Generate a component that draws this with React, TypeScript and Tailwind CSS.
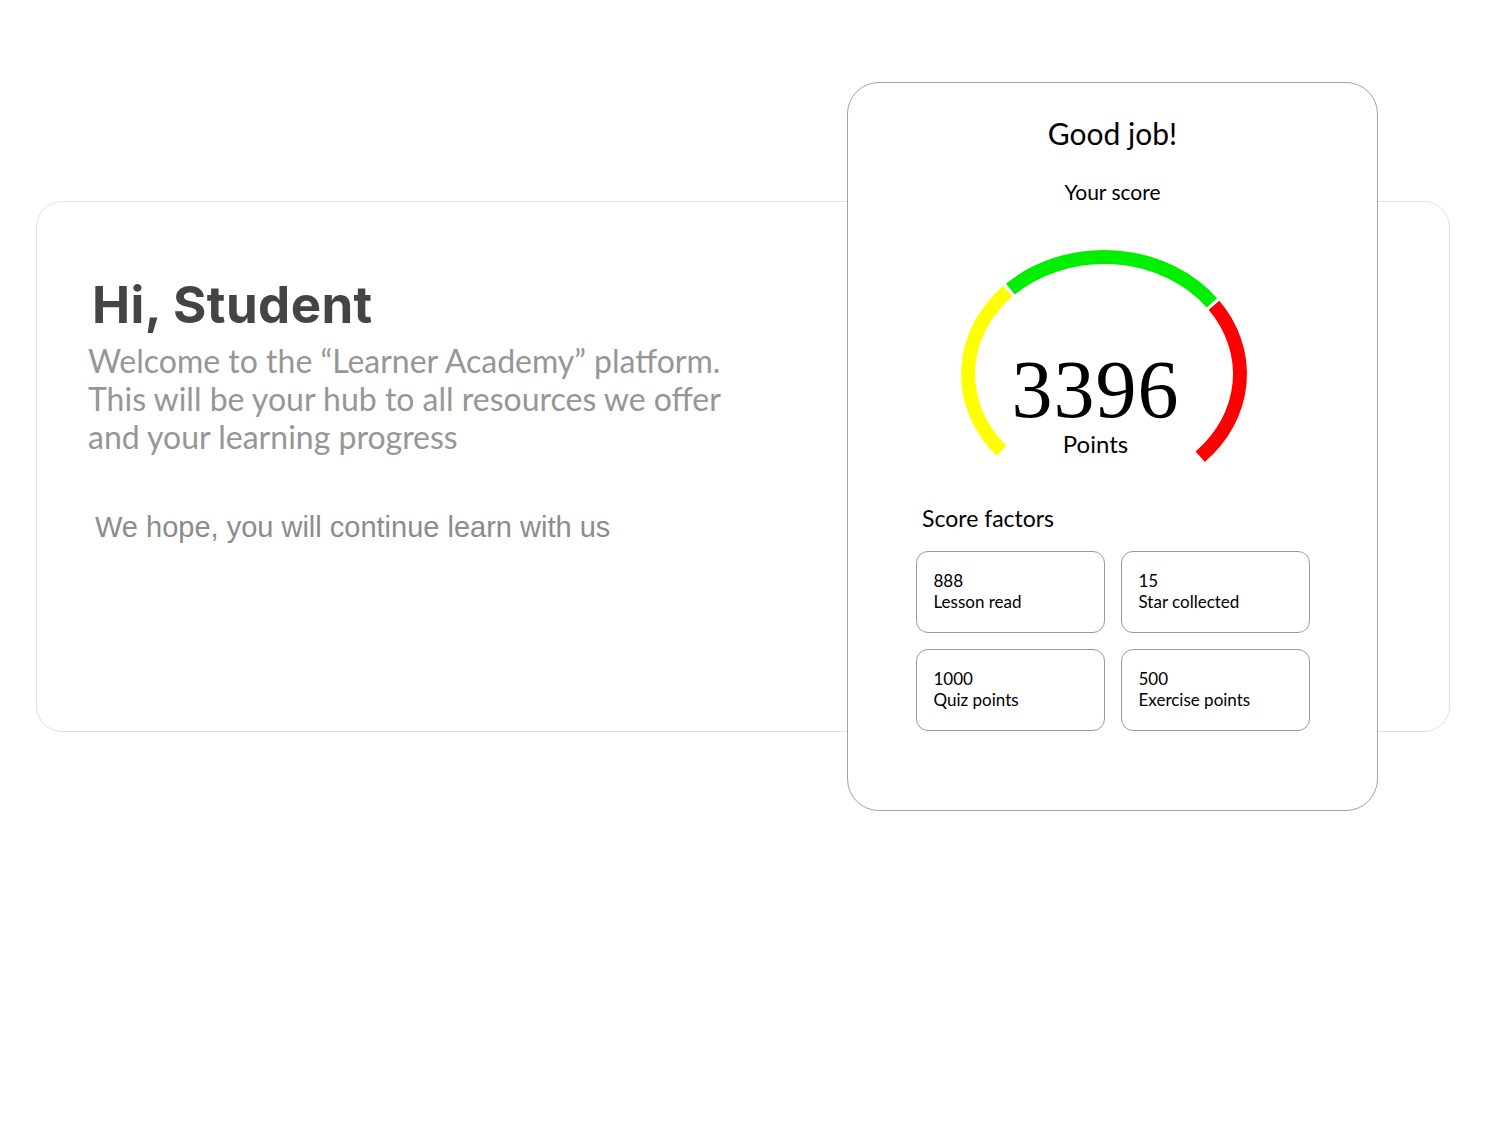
import React from "react";

const sans = { fontFamily: "Lato, 'Noto Sans', sans-serif" };

// point on the gauge ellipse, angle in degrees (0 = right, 90 = top)
const pt = (cx: number, cy: number, rx: number, ry: number, deg: number) => {
  const r = (deg * Math.PI) / 180;
  return [cx + rx * Math.cos(r), cy - ry * Math.sin(r)];
};

const arc = (from: number, to: number) => {
  const cx = 256, cy = 133, rx = 136, ry = 117;
  const [x1, y1] = pt(cx, cy, rx, ry, from);
  const [x2, y2] = pt(cx, cy, rx, ry, to);
  const large = from - to > 180 ? 1 : 0;
  return `M ${x1.toFixed(1)} ${y1.toFixed(1)} A ${rx} ${ry} 0 ${large} 1 ${x2.toFixed(1)} ${y2.toFixed(1)}`;
};

const factors = [
  { value: "888", label: "Lesson read" },
  { value: "15", label: "Star collected" },
  { value: "1000", label: "Quiz points" },
  { value: "500", label: "Exercise points" },
];

const Gauge = () => {
  return (
    <div className="relative mt-[35px] h-[240px] w-full">
      <svg className="absolute inset-0" width="529" height="240" viewBox="0 0 529 240">
        <path d={arc(221, 135)} fill="none" stroke="#ffff00" strokeWidth="14" />
        <path d={arc(133.5, 37.5)} fill="none" stroke="#00ee00" strokeWidth="14" />
        <path d={arc(36, -45)} fill="none" stroke="#ff0000" strokeWidth="14" />
      </svg>
      <div className="relative flex flex-col items-center pt-[114px] pr-[34px]">
        <div
          className="text-[82px] leading-[70px] tracking-[1px] text-black"
          style={{ fontFamily: "'Liberation Serif', 'DejaVu Serif', serif" }}
        >
          3396
        </div>
        <div className="mt-[5px] text-[24px] leading-[28px] text-black" style={sans}>
          Points
        </div>
      </div>
    </div>
  );
};

const ScoreCard = () => {
  return (
    <div
      className="absolute left-[810px] top-[-120px] flex h-[729px] w-[531px] flex-col items-center rounded-[32px] border border-[#a3a3a3] bg-white"
      style={sans}
    >
      <h2 className="pt-[32px] text-[30px] leading-[36px] text-black">Good job!</h2>
      <p className="mt-[27px] text-[21px] leading-[28px] text-black">Your score</p>
      <Gauge />
      <div className="mt-[23px] w-full pl-[74px] text-[23px] leading-[28px] text-black">
        Score factors
      </div>
      <div className="mt-[19px] grid grid-cols-[189px_189px] gap-x-[16px] gap-y-[16px]">
        {factors.map((f) => (
          <div
            key={f.label}
            className="h-[82px] rounded-[12px] border-[1.5px] border-[#9a9a9a] px-[17px] pt-[18px] text-[17px] leading-[21px] text-black"
          >
            <div>{f.value}</div>
            <div>{f.label}</div>
          </div>
        ))}
      </div>
    </div>
  );
};

export default function App() {
  return (
    <div className="min-h-[1125px] w-full bg-white pt-[201px] pl-[36px]">
      <div className="relative h-[531px] w-[1414px] rounded-[26px] border border-[#e2e2e2] bg-white">
        <div className="pl-[55px] pt-[73px]">
          <h1
            className="text-[51px] font-bold leading-[60px] tracking-[0.4px] text-[#444444]"
            style={{ fontFamily: "Inter, 'Open Sans', sans-serif" }}
          >
            Hi, Student
          </h1>
          <p
            className="-ml-[4px] mt-[7px] text-[32px] leading-[38px] text-[#969696]"
            style={sans}
          >
            Welcome to the “Learner Academy” platform.
            <br />
            This will be your hub to all resources we offer
            <br />
            and your learning progress
          </p>
          <p
            className="ml-[3px] mt-[54px] text-[29px] leading-[34px] text-[#8c8c8c]"
            style={{ fontFamily: "'Liberation Sans', Arial, sans-serif" }}
          >
            We hope, you will continue learn with us
          </p>
        </div>
        <ScoreCard />
      </div>
    </div>
  );
}
